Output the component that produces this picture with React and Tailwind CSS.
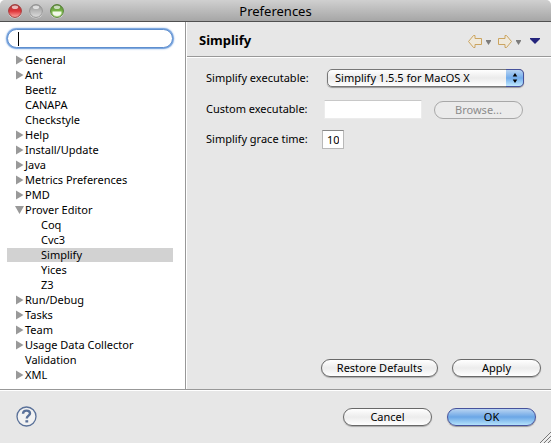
import React from "react";

const TREE = [
  { label: "General", state: "closed" },
  { label: "Ant", state: "closed" },
  { label: "Beetlz" },
  { label: "CANAPA" },
  { label: "Checkstyle" },
  { label: "Help", state: "closed" },
  { label: "Install/Update", state: "closed" },
  { label: "Java", state: "closed" },
  { label: "Metrics Preferences", state: "closed" },
  { label: "PMD", state: "closed" },
  {
    label: "Prover Editor",
    state: "open",
    children: [
      { label: "Coq" },
      { label: "Cvc3" },
      { label: "Simplify", selected: true },
      { label: "Yices" },
      { label: "Z3" },
    ],
  },
  { label: "Run/Debug", state: "closed" },
  { label: "Tasks", state: "closed" },
  { label: "Team", state: "closed" },
  { label: "Usage Data Collector", state: "closed" },
  { label: "Validation" },
  { label: "XML", state: "closed" },
];

function Light({ id, name, edge, mid, glow }) {
  return (
    <button type="button" aria-label={name} className="size-4">
      <svg viewBox="0 0 16 16" className="size-4">
        <defs>
          <linearGradient id={id} x1="0" y1="0" x2="0" y2="1">
            <stop offset="0" stopColor={edge} />
            <stop offset="0.5" stopColor={mid} />
            <stop offset="1" stopColor={glow} />
          </linearGradient>
        </defs>
        <circle cx="8" cy="8.6" r="7" fill="#d8d8d8" />
        <circle cx="8" cy="8" r="6.4" fill={`url(#${id})`} stroke={edge} />
        <ellipse cx="8" cy="4.2" rx="3.2" ry="1.8" fill="#fff" opacity="0.65" />
        {id === "zoom" && (
          <path d="M3.6 8.600h8.800c.4 3-1.600 4.400-4.400 4.400s-4.800-1.400-4.400-4.400z" fill="#f2f8ea" />
        )}
      </svg>
    </button>
  );
}

function Expander({ state, label }) {
  if (!state) return <span className="w-[10px] shrink-0" />;
  return (
    <button type="button" aria-label={`Toggle ${label}`} className="w-[10px] shrink-0">
      <svg viewBox="0 0 10 10" className="block size-[10px]" fill="#999">
        {state === "open" ? <path d="M0 1h9L4.500 9z" /> : <path d="M1 0.500v9L8.500 5z" />}
      </svg>
    </button>
  );
}

function TreeItem({ item, depth }) {
  return (
    <li
      role="treeitem"
      aria-selected={!!item.selected}
      aria-expanded={item.state ? item.state === "open" : undefined}
    >
      <div
        className={`flex h-[15px] items-center border-b border-white leading-[14px] ${
          depth ? "pl-6" : "pl-2"
        } ${item.selected ? "bg-[#d2d2d2]" : ""}`}
      >
        <Expander state={item.state} label={item.label} />
        <span className="whitespace-nowrap">{item.label}</span>
      </div>
      {item.children && (
        <ul role="group">
          {item.children.map((c) => (
            <TreeItem key={c.label} item={c} depth={depth + 1} />
          ))}
        </ul>
      )}
    </li>
  );
}

function PushButton({ children, className, primary, disabled }) {
  const look = primary
    ? "border-[#46529c] bg-linear-to-b from-[#b9d4f1] via-[#6ba6e6] to-[#b4e2fb] shadow-[0_1px_1px_#999]"
    : disabled
      ? "border-[#a8a8a8] bg-[#ebebeb] text-[#8c8c8c]"
      : "border-[#686868] bg-linear-to-b from-white via-[#ececec] to-white shadow-[0_1px_1px_#aaa]";
  return (
    <button
      type="button"
      disabled={disabled}
      className={`flex h-[18px] items-center justify-center rounded-full border leading-4 ${look} ${className}`}
    >
      {children}
    </button>
  );
}

function HistoryArrow({ label, forward }) {
  return (
    <button type="button" aria-label={label} className="flex items-center gap-1">
      <svg viewBox="0 0 14 13" className="h-[13px] w-[14px]" fill="#efe9dc" stroke="#cba460">
        {forward ? (
          <path d="M.5 3.500h6.500v-3h1.500l5 6-5 6h-1.500v-3h-6.500z" />
        ) : (
          <path d="M13.500 3.500h-6.500v-3h-1.500l-5 6 5 6h1.500v-3h6.500z" />
        )}
      </svg>
      <svg viewBox="0 0 5 5" className="mt-[2px] size-[5px]" fill="#7c7c7c">
        <path d="M0 0h5v1L2.500 5 0 1z" />
      </svg>
    </button>
  );
}

export default function App() {
  return (
    <div className="flex min-h-screen flex-col rounded-t-[5px] bg-[#e7e7e7] font-['Noto_Sans','Open_Sans',sans-serif] text-[11px] text-black">
      <header className="grid h-[22px] shrink-0 grid-cols-[1fr_auto_1fr] items-center rounded-t-[5px] border-b border-[#505050] bg-linear-to-b from-[#d0d0d0] to-[#a6a6a6] px-[7px]">
        <div className="flex gap-[5px]">
          <Light id="close" name="Close" edge="#a13b3b" mid="#df3438" glow="#ffaba5" />
          <Light id="mini" name="Minimize" edge="#929292" mid="#b9b9b9" glow="#dedede" />
          <Light id="zoom" name="Zoom" edge="#547f34" mid="#78b648" glow="#c5ee9d" />
        </div>
        <h1 className="text-[13px] leading-5">Preferences</h1>
      </header>

      <div className="flex flex-1">
        <nav className="w-[186px] shrink-0 border-r border-[#989898] bg-white px-[7px] pt-[7px]">
          <div className="relative w-[166px]">
            <input
              type="text"
              aria-label="Filter preferences"
              className="block h-[19px] w-full rounded-full border border-[#5f8fce] bg-white px-[10px] text-[13px] shadow-[0_0_0_1px_#7fa9e0,0_0_2px_1px_#8bb2e5] outline-none"
            />
            <span className="pointer-events-none absolute top-[3px] left-[11px] h-[14px] w-px bg-black" />
          </div>
          <ul role="tree" aria-label="Preference pages" className="mt-[5px] w-[166px]">
            {TREE.map((item) => (
              <TreeItem key={item.label} item={item} depth={0} />
            ))}
          </ul>
        </nav>

        <main className="flex min-w-0 flex-1 flex-col border-l border-white">
          <div className="flex h-[35px] items-center justify-between border-b border-[#999] pt-1 pr-[11px] pl-3 shadow-[0_1px_0_#fff]">
            <h2 className="text-[13px] font-bold">Simplify</h2>
            <div className="flex items-center gap-[7px]">
              <HistoryArrow label="Back" />
              <HistoryArrow label="Forward" forward />
              <button type="button" aria-label="View menu" className="ml-[2px]">
                <svg viewBox="0 0 10 6" className="h-[6px] w-[10px]">
                  <path d="M0 0h10v1L5 6 0 1z" fill="#24247c" />
                </svg>
              </button>
            </div>
          </div>

          <form className="flex flex-1 flex-col pr-[10px] pb-3 pl-[19px]">
            <div className="mt-3 flex h-[18px] items-center">
              <label htmlFor="exe" className="w-[121px] whitespace-nowrap">
                Simplify executable:
              </label>
              <div className="relative">
                <select
                  id="exe"
                  className="block h-[18px] w-[197px] appearance-none rounded-[5px] border border-[#777] bg-linear-to-b from-white via-[#ebebeb] to-white pl-[7px] leading-4 shadow-[0_1px_1px_#999]"
                >
                  <option>Simplify 1.5.5 for MacOS X</option>
                </select>
                <span className="pointer-events-none absolute top-0 right-0 flex h-[18px] w-[18px] items-center justify-center rounded-r-[5px] border border-l-0 border-[#46529c] bg-linear-to-b from-[#b7d3f2] via-[#72aceb] to-[#c0e9ff]">
                  <svg viewBox="0 0 6 12" className="h-3 w-[6px]">
                    <path d="M3 1l2.300 3.500h-4.600zM3 11l2.300-3.500h-4.600z" />
                  </svg>
                </span>
              </div>
            </div>
            <div className="mt-[13px] flex h-[19px] items-center">
              <label htmlFor="custom" className="w-[118px] whitespace-nowrap">
                Custom executable:
              </label>
              <input
                id="custom"
                type="text"
                disabled
                className="h-[19px] w-[98px] border border-[#ececec] border-t-[#c8c8c8] bg-white px-1"
              />
              <PushButton disabled className="ml-3 w-[89px]">Browse...</PushButton>
            </div>
            <div className="mt-[11px] flex h-[19px] items-center">
              <label htmlFor="grace" className="w-[116px] whitespace-nowrap">
                Simplify grace time:
              </label>
              <input
                id="grace"
                type="text"
                defaultValue="10"
                className="h-[19px] w-[22px] border border-[#b8b8b8] border-t-[#888] bg-white px-1 leading-4"
              />
            </div>
            <div className="mt-auto flex justify-end gap-[14px]">
              <PushButton className="w-[117px]">Restore Defaults</PushButton>
              <PushButton className="w-[89px]">Apply</PushButton>
            </div>
          </form>
        </main>
      </div>

      <footer className="relative flex h-[54px] shrink-0 items-center justify-between border-t border-[#989898] pr-[15px] pl-4 shadow-[inset_0_1px_0_#fff]">
        <button type="button" aria-label="Help">
          <svg viewBox="0 0 21 21" className="block size-[21px]" fill="none" stroke="#5a7199">
            <circle cx="10.500" cy="10.500" r="9.500" fill="#f2f2f2" strokeWidth="1.300" />
            <path
              d="M7 7.800c.1-2.200 1.500-3.200 3.500-3.200s3.500 1 3.500 2.800c0 2.200-3.200 2.300-3.200 5"
              strokeWidth="2.400"
            />
            <path d="M9.400 14.200h2.800v2.300h-2.800z" fill="#5a7199" stroke="none" />
          </svg>
        </button>
        <div className="flex gap-[15px]">
          <PushButton className="w-[89px]">Cancel</PushButton>
          <PushButton primary className="w-[89px]">OK</PushButton>
        </div>
        <svg
          viewBox="0 0 12 12"
          className="absolute right-0 bottom-0 size-3"
          stroke="#777"
          fill="none"
        >
          <path d="M1 12L12 1M5 12l7-7M9 12l3-3" />
          <path d="M2 12.500L12.500 2M6 12.500L12.500 6" stroke="#fff" strokeWidth="0.600" />
        </svg>
      </footer>
    </div>
  );
}
